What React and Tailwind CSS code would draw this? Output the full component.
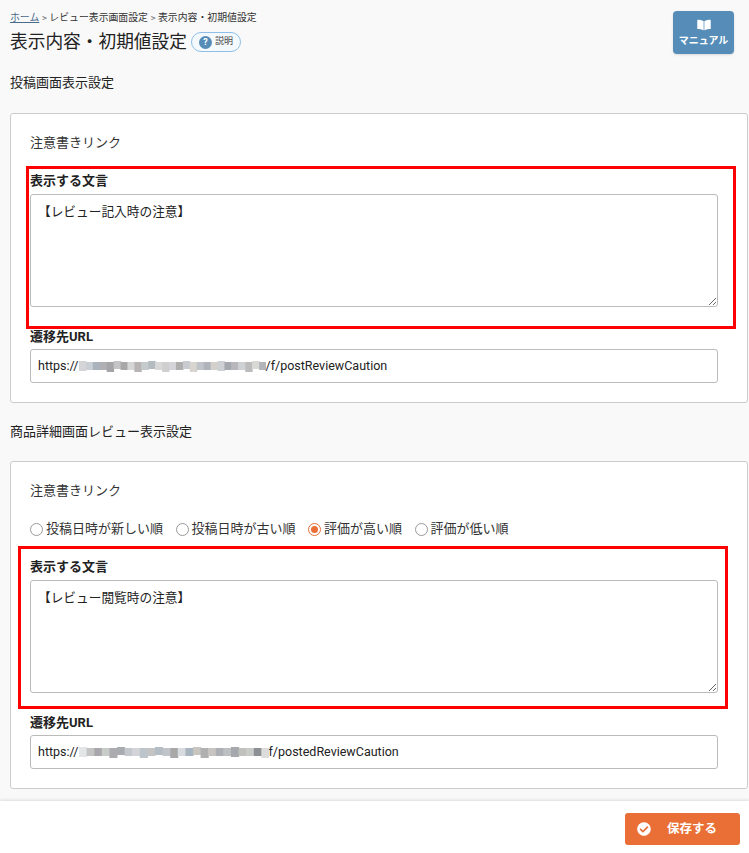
import { FaBookOpen, FaCheckCircle } from "react-icons/fa";

const font = "font-['Roboto','Noto_Sans_CJK_JP',sans-serif]";

const blur1 = ["#d5d5d8","#c9cfd4","#a9b2bd","#b0b0b4","#a5a5a8","#c5c5c8","#a8a8a8","#d6d6d6","#b8b4b4","#c5cacc","#b4bcc0","#d8d8d8","#cfcfcf","#d4d4d8","#aeaeae","#c8ccd0","#d8d4cf","#c0c4c8","#b0b4ba","#d4d0cc","#cdd0d4","#a5a8ae","#b8b8bc","#cfd2d4","#bcbcbc","#d8d8d4","#b2b6ba"];
const blur2 = ["#e2e6e6","#c4c4c4","#a8a8ac","#c8ccc8","#acacb0","#a8acb0","#c4c8cc","#d4d4d8","#bcc4cc","#c4c4c4","#b4bcc4","#c0c4c8","#a8a8a8","#d8dce0","#a8b4c0","#c8c4c0","#b0b0b0","#c8c4c4","#acb0b4","#bcc0c0","#a4a8ac","#c0c0bc","#c8ccc8","#8c9094","#dcdcdc"];

function Mosaic({ colors, width }) {
  return (
    <svg width={width} height="14" className="inline-block align-[-2px] blur-[0.6px]">
      {colors.map((c, i) => (
        <rect key={i} x={(i * width) / colors.length} y={i % 5 == 0 ? 2 : 3} width={width / colors.length + 0.5} height={i % 4 == 0 ? 10 : 8} fill={c} />
      ))}
    </svg>
  );
}

function Radio({ label, checked }) {
  return (
    <label className="flex items-center gap-[3px]">
      <span className={`w-[13px] h-[13px] rounded-full border flex items-center justify-center bg-white ${checked ? "border-[#e96f36]" : "border-[#999]"}`}>
        {checked && <span className="w-[7px] h-[7px] rounded-full bg-[#e96f36]" />}
      </span>
      {label}
    </label>
  );
}

function Field({ text, children, boxClass }) {
  return (
    <>
      <div className="relative pt-[7px]">
        <div className="font-bold text-[13px] leading-[13px] text-[#222]">表示する文言</div>
        <textarea
          defaultValue={text}
          className="block w-full h-[113px] mt-[7px] px-[7px] py-[8px] bg-white border border-[#bbb] rounded-[3px] text-[12.7px] leading-[18px] text-[#222] outline-none"
        />
        <div className={`absolute border-[3px] border-[#f00] pointer-events-none ${boxClass}`} />
      </div>
      <div className="font-bold text-[13px] leading-[13px] text-[#222] mt-[23px]">遷移先URL</div>
      {children}
    </>
  );
}

function UrlBox({ children }) {
  return (
    <div className="h-[34px] mt-[6px] px-[7px] flex items-center bg-white border border-[#bbb] rounded-[3px] text-[12.5px] text-[#222] whitespace-nowrap">
      {children}
    </div>
  );
}

export default function App() {
  return (
    <div className={`${font} h-screen flex flex-col overflow-hidden bg-[#f9f9f9] text-[#222]`}>
      <div className="flex-1 min-h-0 pl-[10px] pr-[1px]">
        <div className="flex justify-between items-start h-[66px] pt-[11px] pr-[14px]">
          <div className="mt-[1px]">
            <div className="text-[9.87px] leading-[12px] text-[#333] whitespace-nowrap">
              <a className="underline text-[#4a6a8a]">ホーム</a>
              <span className="text-[#777]"> &gt; </span>レビュー表示画面設定
              <span className="text-[#777]"> &gt; </span>表示内容・初期値設定
            </div>
            <div className="flex items-center mt-[5px] h-[26px]">
              <h1 className="text-[17.7px] font-normal leading-[26px]">表示内容・初期値設定</h1>
              <span className="ml-[4px] w-[50px] h-[20px] rounded-full border border-[#8fbfe6] bg-[#f4f9fd] flex items-center justify-center gap-[3px] text-[9px] text-[#444]">
                <span className="w-[13px] h-[13px] rounded-full bg-[#568db8] text-white font-bold text-[9px] leading-[13px] text-center">?</span>
                説明
              </span>
            </div>
          </div>
          <div className="w-[61px] h-[43px] rounded-[4px] bg-[#568db8] shadow-sm text-white flex flex-col items-center justify-center gap-[4px]">
            <FaBookOpen className="w-[14px] h-[12px]" />
            <span className="text-[10px] leading-[12px] font-bold">マニュアル</span>
          </div>
        </div>

        <h2 className="text-[13px] font-normal leading-[34px] h-[47px]">投稿画面表示設定</h2>

        <section className="h-[290px] bg-white border border-[#ccc] rounded-[3px] pl-[19px] pr-[29px] pt-[20px]">
          <div className="text-[13px] leading-[18px] text-[#333]">注意書きリンク</div>
          <div className="mt-[15px]">
            <Field text="【レビュー記入時の注意】" boxClass="-left-[4px] -right-[18px] -top-[1px] -bottom-[22px]">
              <UrlBox>
                https://
                <Mosaic colors={blur1} width={187} />
                /f/postReviewCaution
              </UrlBox>
            </Field>
          </div>
        </section>

        <h2 className="text-[13px] font-normal leading-[58px] h-[58px]">商品詳細画面レビュー表示設定</h2>

        <section className="h-[328px] bg-white border border-[#ccc] rounded-[3px] pl-[19px] pr-[29px] pt-[20px]">
          <div className="text-[13px] leading-[18px] text-[#333]">注意書きリンク</div>
          <div className="flex gap-[12.5px] mt-[20px] h-[18px] text-[13px] text-[#333]">
            <Radio label="投稿日時が新しい順" />
            <Radio label="投稿日時が古い順" />
            <Radio label="評価が高い順" checked />
            <Radio label="評価が低い順" />
          </div>
          <div className="mt-[15px]">
            <Field text="【レビュー閲覧時の注意】" boxClass="-left-[12px] -right-[10px] -top-[7px] -bottom-[16px]">
              <UrlBox>
                https://
                <Mosaic colors={blur2} width={190} />
                f/postedReviewCaution
              </UrlBox>
            </Field>
          </div>
        </section>
      </div>

      <footer className="h-[52px] shrink-0 bg-white shadow-[0_-1px_3px_rgba(0,0,0,0.12)] flex justify-end items-center pr-[9px]">
        <button className="w-[115px] h-[32px] mt-[4px] rounded-[3px] bg-[#e96f36] text-white text-[12.5px] font-bold flex items-center pl-[12px]">
          <FaCheckCircle className="w-[14px] h-[14px]" />
          <span className="ml-[16px]">保存する</span>
        </button>
      </footer>
    </div>
  );
}
